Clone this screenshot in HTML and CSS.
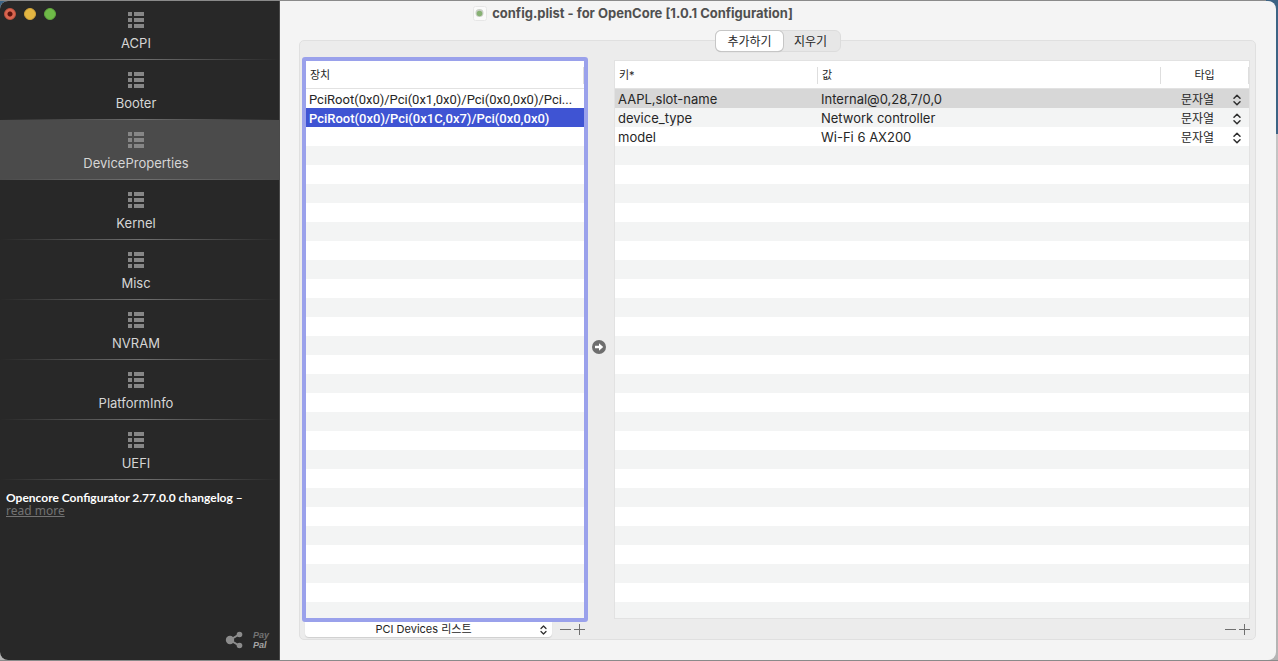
FILE: index.html
```html
<!DOCTYPE html>
<html lang="ko">
<head>
<meta charset="utf-8">
<title>config.plist - for OpenCore</title>
<link rel="stylesheet" href="styles.css">
</head>
<body>
<svg class="defs" aria-hidden="true">
  <symbol id="list" viewBox="0 0 16 16"><path d="M0 0h4v4H0zM6 0h10v4H6zM0 6h4v4H0zM6 6h10v4H6zM0 12h4v4H0zM6 12h10v4H6z" fill="currentColor"/></symbol>
  <symbol id="updown" viewBox="0 0 8 12"><path d="M1 4.2 4 1.2l3 3M1 7.8l3 3 3-3" fill="none" stroke="currentColor" stroke-width="1.5" stroke-linecap="round" stroke-linejoin="round"/></symbol>
  <symbol id="minus" viewBox="0 0 11 11"><path d="M0 5.5h11" stroke="currentColor"/></symbol>
  <symbol id="plus" viewBox="0 0 11 11"><path d="M0 5.5h11M5.5 0v11" stroke="currentColor"/></symbol>
</svg>
<div class="window">
  <aside class="sidebar">
    <div class="lights">
      <button class="light close" aria-label="Close"></button>
      <button class="light minimize" aria-label="Minimize"></button>
      <button class="light zoom" aria-label="Zoom"></button>
    </div>
    <nav class="nav">
      <button class="nav-item"><svg class="nav-icon"><use href="#list"/></svg>ACPI</button>
      <button class="nav-item"><svg class="nav-icon"><use href="#list"/></svg>Booter</button>
      <button class="nav-item active"><svg class="nav-icon"><use href="#list"/></svg>DeviceProperties</button>
      <button class="nav-item"><svg class="nav-icon"><use href="#list"/></svg>Kernel</button>
      <button class="nav-item"><svg class="nav-icon"><use href="#list"/></svg>Misc</button>
      <button class="nav-item"><svg class="nav-icon"><use href="#list"/></svg>NVRAM</button>
      <button class="nav-item"><svg class="nav-icon"><use href="#list"/></svg>PlatformInfo</button>
      <button class="nav-item"><svg class="nav-icon"><use href="#list"/></svg>UEFI</button>
    </nav>
    <p class="news"><strong>Opencore Configurator 2.77.0.0 changelog –</strong><a href="#more">read more</a></p>
    <div class="side-foot">
      <button class="share" aria-label="Share"><svg width="18" height="18" viewBox="0 0 18 18"><path d="M14 3.500 5 9l9 5.500" fill="none" stroke="currentColor" stroke-width="2"/><circle cx="5" cy="9" r="4.200" fill="currentColor"/><circle cx="14.500" cy="3.500" r="2.800" fill="currentColor"/><circle cx="14.500" cy="14.500" r="2.800" fill="currentColor"/></svg></button>
      <a class="paypal" href="#paypal"><span>Pay</span><span class="pal">Pal</span></a>
    </div>
  </aside>
  <main class="main">
    <header class="titlebar">
      <svg width="14" height="15" viewBox="0 0 14 15"><rect x=".5" y=".5" width="13" height="14" rx="2" fill="#fafafa" stroke="#e6e6e6"/><circle cx="6.500" cy="7" r="4" fill="#c9cfc6"/><circle cx="6.500" cy="7.500" r="2.800" fill="#87b174"/></svg>
      <h1>config.plist - for OpenCore [1.0.1 Configuration]</h1>
    </header>
    <div class="segments">
      <button class="segment on">추가하기</button><button class="segment">지우기</button>
    </div>
    <section class="panel">
      <div class="pane devices">
        <div class="grid focused">
          <table>
            <thead><tr><th><span class="head">장치</span></th></tr></thead>
            <tbody>
              <tr><td>PciRoot(0x0)/Pci(0x1,0x0)/Pci(0x0,0x0)/Pci...</td></tr>
              <tr class="selected"><td>PciRoot(0x0)/Pci(0x1C,0x7)/Pci(0x0,0x0)</td></tr>
            </tbody>
          </table>
        </div>
        <div class="tools">
          <div class="popup">
            <select aria-label="PCI Devices"><option>PCI Devices 리스트</option></select>
            <svg class="arrows"><use href="#updown"/></svg>
          </div>
          <button class="tool" aria-label="Remove device"><svg><use href="#minus"/></svg></button>
          <button class="tool" aria-label="Add device"><svg><use href="#plus"/></svg></button>
        </div>
      </div>
      <div class="between">
        <button class="go" aria-label="Export"><svg width="14" height="14" viewBox="0 0 14 14"><circle cx="7" cy="7" r="7" fill="#6e6e6e"/><path d="M3 5.800h4V3.200L11.200 7 7 10.800V8.200H3z" fill="#fff"/></svg></button>
      </div>
      <div class="pane values">
        <div class="grid">
          <table>
            <colgroup><col class="c-key"><col><col class="c-type"></colgroup>
            <thead><tr><th><span class="head">키*</span></th><th><span class="head">값</span></th><th><span class="head center">타입</span></th></tr></thead>
            <tbody>
              <tr class="picked"><td>AAPL,slot-name</td><td>Internal@0,28,7/0,0</td><td><div class="type"><select aria-label="AAPL,slot-name type"><option>문자열</option></select><svg class="arrows"><use href="#updown"/></svg></div></td></tr>
              <tr><td>device_type</td><td>Network controller</td><td><div class="type"><select aria-label="device_type type"><option>문자열</option></select><svg class="arrows"><use href="#updown"/></svg></div></td></tr>
              <tr><td>model</td><td>Wi-Fi 6 AX200</td><td><div class="type"><select aria-label="model type"><option>문자열</option></select><svg class="arrows"><use href="#updown"/></svg></div></td></tr>
            </tbody>
          </table>
        </div>
        <div class="tools end">
          <button class="tool" aria-label="Remove property"><svg><use href="#minus"/></svg></button>
          <button class="tool" aria-label="Add property"><svg><use href="#plus"/></svg></button>
        </div>
      </div>
    </section>
  </main>
</div>
</body>
</html>
```
FILE: styles.css
```css
* { box-sizing: border-box; }

body {
  margin: 0;
  height: 100vh;
  display: flex;
  padding: 1px 2px 1px 0;
  background: linear-gradient(#8a8a8a 1px, transparent 1px) 0 0 / calc(100% - 12px) 100% no-repeat, linear-gradient(#3c6384 134px, #c4c4c4 134px, #b4b4b4 calc(100% - 1px), #8a8a8a calc(100% - 1px));
  font: 13px/19px Inter, "Noto Sans CJK KR", sans-serif;
  color: #262626;
}

button, select {
  margin: 0;
  padding: 0;
  border: 0;
  background: none;
  font: inherit;
  color: inherit;
  appearance: none;
}

svg { display: block; }
.defs { position: absolute; width: 0; height: 0; }

.window {
  flex: 1;
  min-width: 0;
  display: flex;
  border-radius: 8px;
  overflow: hidden;
  background: #f4f4f4;
}

/* Sidebar */
.sidebar {
  position: relative;
  z-index: 1;
  flex: 0 0 280px;
  display: flex;
  flex-direction: column;
  background: #282828;
  border-right: 1px solid #4a4a4a;
}

.lights { position: absolute; top: 7px; left: 4px; display: flex; gap: 8px; }
.light { width: 12px; height: 12px; border-radius: 50%; }
.close { background: radial-gradient(circle, #5c120c 2px, #da6550 3px); border: 1px solid #c25440; }
.minimize { background: #e3b642; border: 1px solid #d0a33a; }
.zoom { background: #6fba48; border: 1px solid #60a63d; }

.nav { display: flex; flex-direction: column; }

.nav-item {
  height: 60px;
  padding: 12px 7px 0 0;
  display: flex;
  flex-direction: column;
  align-items: center;
  gap: 6px;
  color: #d6d6d6;
  background: linear-gradient(90deg, transparent, #707070 50%, transparent) bottom / 100% 1px no-repeat;
}
.nav-item:first-child { height: 59px; padding-top: 11px; }
.nav-item.active { background-color: #4b4b4b; }
.nav-icon { width: 16px; height: 16px; color: #868686; }

.news {
  margin: 11px 6px;
  display: flex;
  flex-direction: column;
  align-items: flex-start;
  font: 12px/13px "Noto Sans", sans-serif;
  color: #fff;
  white-space: nowrap;
}
.news strong { font-family: Lato, sans-serif; font-weight: 700; }
.news a { color: #737373; }

.side-foot {
  margin-top: auto;
  padding: 0 10px 10px 0;
  display: flex;
  justify-content: flex-end;
  align-items: center;
  gap: 10px;
}
.share { color: #8c8c8c; }
.paypal {
  display: flex;
  flex-direction: column;
  font: italic bold 9px/10px "Liberation Sans", sans-serif;
  color: #727272;
  text-decoration: none;
}
.pal { color: #a4a4a4; }

/* Main area */
.main { flex: 1; min-width: 0; display: flex; flex-direction: column; }

/* The title is centred on the whole window, sidebar included */
.titlebar {
  height: 29px;
  margin-left: -280px;
  padding: 0 10px 4px 0;
  display: flex;
  justify-content: center;
  align-items: center;
  gap: 5px;
}
.titlebar h1 { margin: 0; font-size: 13px; font-weight: 700; color: #505050; white-space: nowrap; }

.segments {
  position: relative;
  align-self: center;
  height: 22px;
  margin-bottom: -12px;
  display: flex;
  border: 1px solid #dcdcdc;
  border-radius: 6px;
  background: #e7e7e7;
  font-size: 12px;
}
.segment { width: 57px; padding-right: 2px; line-height: 19px; }
.segment.on {
  width: 67px;
  padding: 0;
  border-radius: 5px;
  background: #fff;
  box-shadow: 0 0 0 1px #c6c6c6, 0 1px 1px #b0b0b0;
}

.panel {
  flex: 1;
  min-height: 0;
  margin: 0 20px 20px 19px;
  padding: 16px 5px 2px 2px;
  display: flex;
  border: 1px solid #e0e0e0;
  border-radius: 5px;
  background: #ececec;
}

.pane { display: flex; flex-direction: column; min-width: 0; }
.devices { flex: 0 0 286px; }
.values { flex: 1; padding-top: 3px; }
.between { flex: 0 0 26px; display: flex; flex-direction: column; justify-content: center; padding-left: 4px; }
.go { width: 14px; }

.grid {
  flex: 1;
  min-height: 0;
  overflow: hidden;
  border: 1px solid #e2e2e2;
  background: repeating-linear-gradient(#fff 0 19px, #f3f4f4 19px 38px) 0 28px;
}
.grid.focused { border: 4px solid #9aa1eb; border-radius: 3px; }

table { width: 100%; table-layout: fixed; border-collapse: separate; border-spacing: 0; }
.c-key { width: 203px; }
.c-type { width: 88px; }

th {
  height: 28px;
  padding: 1px 0 0;
  background: #fff;
  border-bottom: 1px solid #e2e2e2;
  font-size: 11px;
  font-weight: 400;
  text-align: left;
}
.head { display: block; padding-left: 4px; line-height: 17px; border-right: 1px solid #dedede; }
.head.center { text-align: center; padding: 0; }

td {
  height: 19px;
  padding: 2px 3px 0;
  line-height: 17px;
  white-space: nowrap;
  overflow: hidden;
  text-overflow: ellipsis;
}
.devices td { font-family: Roboto, sans-serif; }
.devices .selected { background: #3f54d3; color: #fff; font-weight: 500; }
.picked { background: #d7d7d7; }

.type { display: flex; align-items: center; justify-content: flex-end; gap: 18px; padding-right: 5px; font-size: 12px; }
.type select { height: 17px; line-height: 17px; }
.arrows { width: 8px; height: 12px; color: #303030; }

.tools { height: 15px; display: flex; align-items: center; gap: 3px; padding: 0 3px; }
.tools.end { height: 18px; justify-content: flex-end; padding: 3px 0 0; }
.tool { color: #707070; }
.tool svg { width: 11px; height: 11px; }

.popup { position: relative; flex: 1; margin-right: 5px; }
.popup select {
  display: block;
  width: 100%;
  height: 15px;
  padding-right: 10px;
  border-radius: 0 0 4px 4px;
  background: #fff;
  box-shadow: 0 1px 1px #cfcfcf;
  font-size: 11px;
  line-height: 15px;
  text-align-last: center;
}
.popup .arrows { position: absolute; top: 3px; right: 5px; width: 7px; height: 10px; }
```
